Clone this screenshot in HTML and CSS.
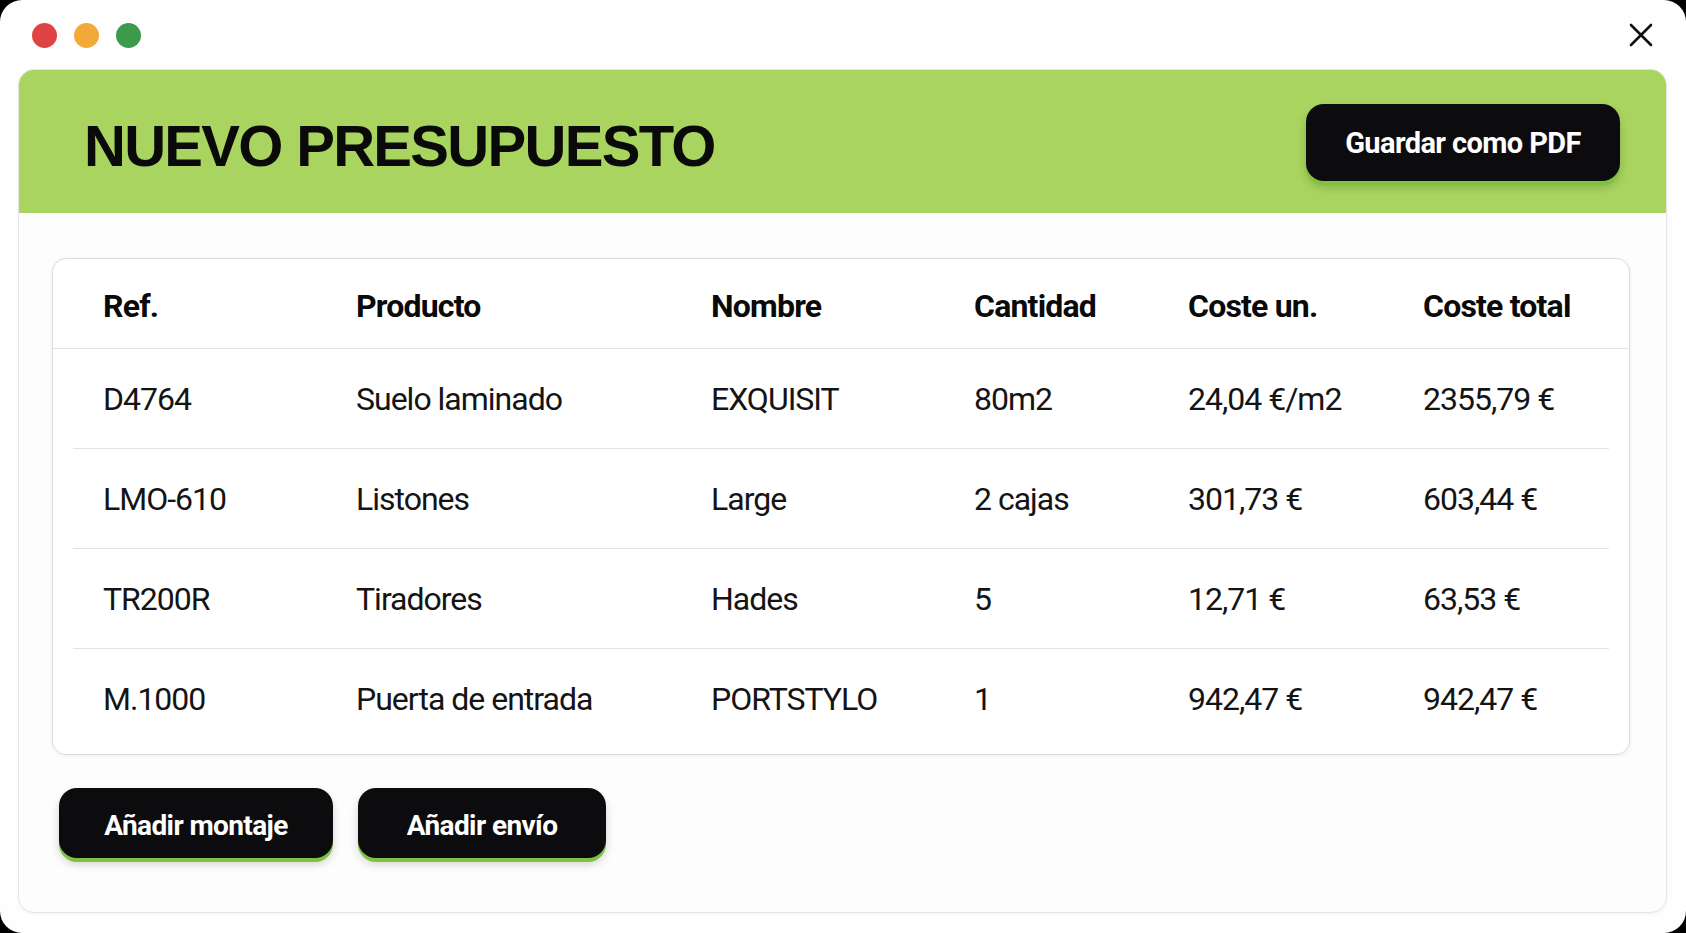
FILE: index.html
```html
<!DOCTYPE html>
<html lang="es">
<head>
  <meta charset="UTF-8" />
  <meta name="viewport" content="width=device-width, initial-scale=1.0"/>
  <title>Nuevo presupuesto</title>
  <link rel="stylesheet" href="styles.css">
</head>
<body>
  <div class="window">
    <div class="titlebar">
      <div class="lights">
        <span class="light red"></span>
        <span class="light amber"></span>
        <span class="light green"></span>
      </div>
      <button class="close" aria-label="Cerrar">
        <svg width="26" height="26" viewBox="0 0 26 26">
          <path d="M3 3 L23 23 M23 3 L3 23" stroke="#111" stroke-width="2.6" stroke-linecap="round" fill="none"/>
        </svg>
      </button>
    </div>

    <div class="sheet">
      <div class="header">
        <h1>NUEVO PRESUPUESTO</h1>
        <button class="btn btn-big">Guardar como PDF</button>
      </div>

      <div class="content">
        <div class="table">
          <div class="row head">
            <div>Ref.</div>
            <div>Producto</div>
            <div>Nombre</div>
            <div>Cantidad</div>
            <div>Coste un.</div>
            <div>Coste total</div>
          </div>
          <div class="row">
            <div>D4764</div>
            <div>Suelo laminado</div>
            <div>EXQUISIT</div>
            <div>80m2</div>
            <div>24,04 €/m2</div>
            <div>2355,79 €</div>
          </div>
          <div class="row">
            <div>LMO-610</div>
            <div>Listones</div>
            <div>Large</div>
            <div>2 cajas</div>
            <div>301,73 €</div>
            <div>603,44 €</div>
          </div>
          <div class="row">
            <div>TR200R</div>
            <div>Tiradores</div>
            <div>Hades</div>
            <div>5</div>
            <div>12,71 €</div>
            <div>63,53 €</div>
          </div>
          <div class="row">
            <div>M.1000</div>
            <div>Puerta de entrada</div>
            <div>PORTSTYLO</div>
            <div>1</div>
            <div>942,47 €</div>
            <div>942,47 €</div>
          </div>
        </div>

        <div class="actions">
          <button class="btn btn-small montaje">Añadir montaje</button>
          <button class="btn btn-small envio">Añadir envío</button>
        </div>
      </div>
    </div>
  </div>
</body>
</html>
```

FILE: styles.css
```css
:root {
  --lime: #a8d45f;
  --lime-dark: #7fc23f;
  --ink: #0c0c0e;
  --line: #e3e3e3;
}
html, body {
  margin: 0;
  padding: 0;
  background: #000;
}
body {
  font-family: Roboto, 'Liberation Sans', Arial, sans-serif;
  color: #111;
}
.window {
  height: 933px;
  box-sizing: border-box;
  background: #fefefe;
  border-radius: 22px;
  padding: 0 19px 20px 18px;
  display: flex;
  flex-direction: column;
}
.titlebar {
  height: 69px;
  box-sizing: border-box;
  display: flex;
  align-items: center;
  justify-content: space-between;
  padding: 1px 13px 0 14px;
}
.lights {
  display: flex;
  gap: 17px;
}
.light {
  width: 25px;
  height: 25px;
  border-radius: 50%;
}
.red { background: #e04343; }
.amber { background: #f2a937; }
.green { background: #3c9a4c; }
.close {
  border: 0;
  background: none;
  padding: 0;
  width: 26px;
  height: 26px;
  cursor: pointer;
}
.close svg { display: block; }

.sheet {
  flex: 1;
  background: #fdfdfd;
  border: 1px solid #e6e6e6;
  border-radius: 16px;
  overflow: hidden;
  box-shadow: 0 1px 3px rgba(0,0,0,0.05);
}
.header {
  height: 143px;
  background: var(--lime);
  display: flex;
  align-items: center;
  justify-content: space-between;
  padding: 0 46px 0 65px;
}
h1 {
  margin: 8px 0 0 0;
  font-family: 'Liberation Sans', Arial, sans-serif;
  font-size: 58px;
  font-weight: 700;
  letter-spacing: -1.7px;
  color: #0a0a0a;
}
.btn {
  border: 0;
  background: var(--ink);
  color: #fff;
  font-family: Roboto, 'Liberation Sans', Arial, sans-serif;
  font-weight: 700;
  letter-spacing: -0.6px;
  cursor: pointer;
  box-shadow: 0 4px 0 var(--lime-dark), 0 6px 10px rgba(0,0,0,0.18);
}
.btn-big {
  width: 314px;
  height: 77px;
  border-radius: 18px;
  font-size: 29px;
  margin-top: 2px;
  padding-top: 2px;
}

.content {
  padding: 45px 36px 0 33px;
}
.table {
  background: #fff;
  border: 1px solid #dcdcdc;
  border-radius: 14px;
  padding-bottom: 6px;
  box-shadow: 0 1px 4px rgba(0,0,0,0.06);
}
.row {
  display: grid;
  grid-template-columns: 253px 355px 263px 214px 235px 1fr;
  align-items: center;
  height: 99px;
  margin: 0 20px;
  padding-left: 30px;
  border-bottom: 1px solid var(--line);
  font-size: 32px;
  letter-spacing: -1px;
  color: #141414;
}
.row:last-child {
  border-bottom: 0;
}
.row.head {
  height: 85px;
  margin: 0;
  padding: 4px 0 0 50px;
  font-weight: 700;
  letter-spacing: -0.8px;
  color: #0a0a0a;
}

.actions {
  display: flex;
  gap: 25px;
  padding: 33px 0 0 7px;
}
.btn-small {
  height: 70px;
  border-radius: 18px;
  font-size: 28px;
  padding-top: 5px;
}
.montaje { width: 274px; }
.envio { width: 248px; }
```
